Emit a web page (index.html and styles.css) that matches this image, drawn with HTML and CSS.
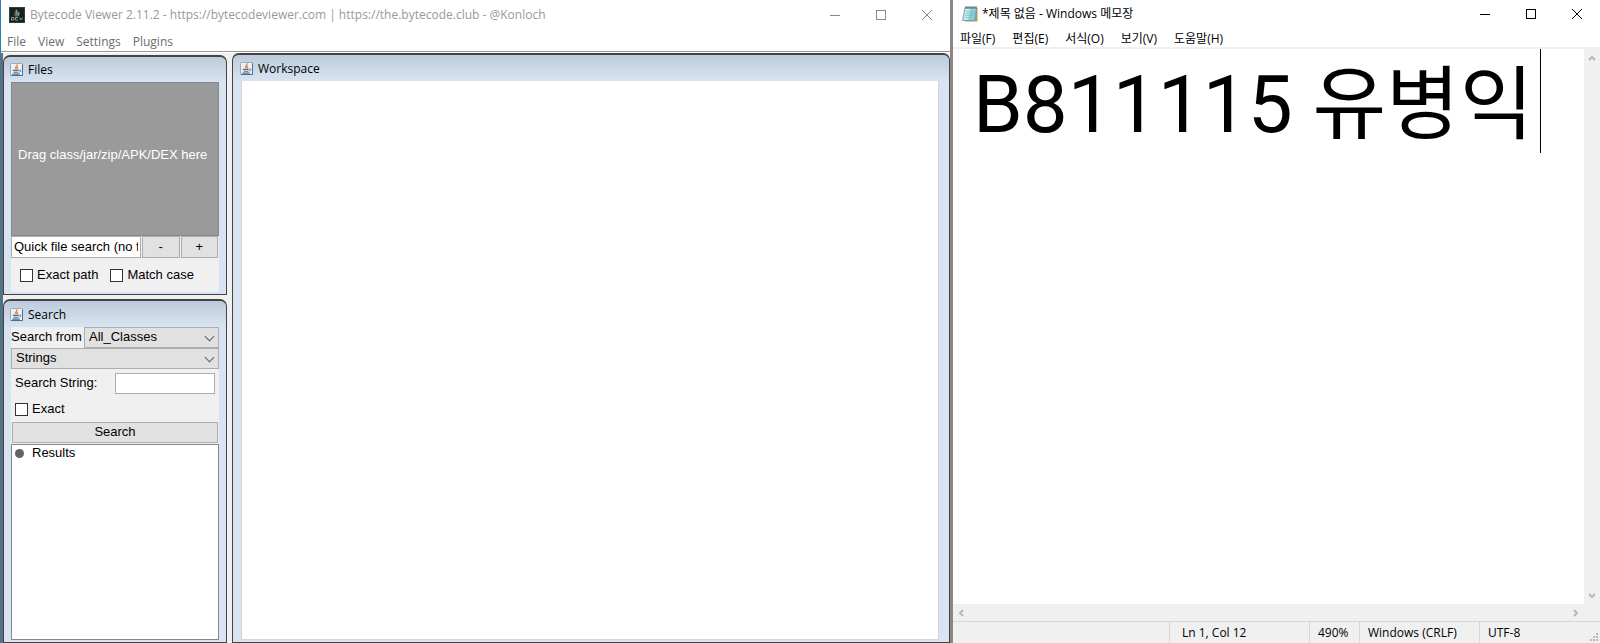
FILE: index.html
```html
<!DOCTYPE html>
<html lang="ko">
<head>
<meta charset="utf-8">
<title>Desktop</title>
<link rel="stylesheet" href="styles.css">
</head>
<body>
<svg class="defs" aria-hidden="true">
  <symbol id="java" viewBox="0 0 14 14">
    <rect x="0.5" y="0.5" width="13" height="13" rx="1" fill="#eef1f4" stroke="#8ba3b8"/>
    <path d="M1 13.5h12.5v-12" fill="none" stroke="#46647e"/>
    <path d="M7.5 1.500c1 1.500-3 2.500-1 5M8.500 4c-1.500 1-1 1.500-.5 3" fill="none" stroke="#e8792b" stroke-width="1.300"/>
    <path d="M3 8h6.500M4 10h5M2.500 12h8" fill="none" stroke="#456f93" stroke-width="1.200"/>
    <path d="M10 7.500c2.500-.5 2 2 0 2.200" fill="none" stroke="#456f93"/>
  </symbol>
  <symbol id="min" viewBox="0 0 12 12"><path d="M1 6.500h10" stroke="currentColor" fill="none"/></symbol>
  <symbol id="max" viewBox="0 0 12 12"><rect x="1.500" y="1.500" width="9" height="9" stroke="currentColor" fill="none"/></symbol>
  <symbol id="close" viewBox="0 0 12 12"><path d="M1 1l10 10M11 1L1 11" stroke="currentColor" fill="none"/></symbol>
  <symbol id="chev" viewBox="0 0 8 6"><path d="M1 5l3-3 3 3" stroke="currentColor" stroke-width="2" fill="none"/></symbol>
</svg>
<div class="desktop">
  <main class="viewer">
    <header class="titlebar">
      <svg class="app-icon" viewBox="0 0 16 16" aria-hidden="true">
        <rect width="16" height="16" fill="#17221f"/>
        <rect x=".5" y=".5" width="15" height="15" fill="none" stroke="#33413c"/>
        <path d="M5 8l1-4 2-2 1 3 2 1-1 3-3 1z" fill="#55645e"/>
        <path d="M7 3l1 2-1 3M10 5l-1 4" stroke="#a0aca6" fill="none" stroke-width=".8"/>
        <path d="M2.500 10.500h2.500v2.500H2.500zM9 10.500H6.500V13H9M10.500 10.500l1.500 2.500 1.500-2.500" stroke="#8d9692" fill="none"/>
      </svg>
      <h1>Bytecode Viewer 2.11.2 - https://bytecodeviewer.com | https://the.bytecode.club - @Konloch</h1>
      <div class="controls">
        <button aria-label="Minimize"><svg><use href="#min"/></svg></button>
        <button aria-label="Maximize"><svg><use href="#max"/></svg></button>
        <button aria-label="Close"><svg><use href="#close"/></svg></button>
      </div>
    </header>
    <nav class="menubar">
      <button>File</button><button>View</button><button>Settings</button><button>Plugins</button>
    </nav>
    <div class="panes">
      <div class="sidebar">
        <section class="frame files">
          <h2><svg aria-hidden="true"><use href="#java"/></svg>Files</h2>
          <div class="body">
            <div class="drop">Drag class/jar/zip/APK/DEX here</div>
            <div class="quick">
              <input type="text" aria-label="Quick file search" value="Quick file search (no file extension)">
              <button>-</button>
              <button>+</button>
            </div>
            <div class="checks">
              <label><input type="checkbox">Exact path</label>
              <label><input type="checkbox">Match case</label>
            </div>
          </div>
        </section>
        <section class="frame search">
          <h2><svg aria-hidden="true"><use href="#java"/></svg>Search</h2>
          <div class="body">
            <div class="from">
              <label for="from">Search from</label>
              <div class="combo"><select id="from"><option>All_Classes</option></select></div>
            </div>
            <div class="combo"><select aria-label="Search type"><option>Strings</option></select></div>
            <div class="query">
              <label for="query">Search String:</label>
              <input id="query" type="text">
            </div>
            <label class="exact"><input type="checkbox">Exact</label>
            <button class="go">Search</button>
            <ul class="results"><li>Results</li></ul>
          </div>
        </section>
      </div>
      <section class="frame workspace">
        <h2><svg aria-hidden="true"><use href="#java"/></svg>Workspace</h2>
        <div class="body"></div>
      </section>
    </div>
  </main>
  <aside class="notepad">
    <header class="titlebar">
      <svg class="note-icon" viewBox="0 0 16 16" aria-hidden="true">
        <path d="M4 2h11.500v13.500H3z" fill="#b59a62"/>
        <path d="M3 1.500h11.500L13 14.500H.5z" fill="#8fcbd8" stroke="#5e96a4" stroke-width=".7"/>
        <path d="M3.500 2.500h5L6 14H1.500z" fill="#c3e8ee"/>
        <path d="M4 5.500h9M3.500 7.500h9M3 9.500h9M3 11.500h9" stroke="#79b8c7" stroke-width=".6"/>
        <path d="M4 0v3M6 0v3M8 0v3M10 0v3M12 0v3M14 0v3" stroke="#4c5960" stroke-width=".8"/>
      </svg>
      <h1>*제목 없음 - Windows 메모장</h1>
      <div class="controls">
        <button aria-label="최소화"><svg><use href="#min"/></svg></button>
        <button aria-label="최대화"><svg><use href="#max"/></svg></button>
        <button aria-label="닫기"><svg><use href="#close"/></svg></button>
      </div>
    </header>
    <nav class="menubar">
      <button>파일(F)</button><button>편집(E)</button><button>서식(O)</button><button>보기(V)</button><button>도움말(H)</button>
    </nav>
    <div class="editor">
      <div class="page">
        <textarea aria-label="본문" spellcheck="false">B811115 유병익</textarea>
        <span class="caret"></span>
      </div>
      <div class="scroll vertical">
        <button aria-label="위로"><svg class="up"><use href="#chev"/></svg></button>
        <button aria-label="아래로"><svg class="down"><use href="#chev"/></svg></button>
      </div>
      <div class="scroll horizontal">
        <button aria-label="왼쪽"><svg class="left"><use href="#chev"/></svg></button>
        <button aria-label="오른쪽"><svg class="right"><use href="#chev"/></svg></button>
      </div>
    </div>
    <footer class="status">
      <span class="position">Ln 1, Col 12</span>
      <span class="zoom">490%</span>
      <span class="ending">Windows (CRLF)</span>
      <span class="encoding">UTF-8</span>
      <svg class="grip" viewBox="0 0 8 8" aria-hidden="true"><path d="M6 0h2v2H6zM3 3h2v2H3zM6 3h2v2H6zM0 6h2v2H0zM3 6h2v2H3zM6 6h2v2H6z" fill="#b8b8b8"/></svg>
    </footer>
  </aside>
</div>
</body>
</html>
```
FILE: styles.css
```css
* { box-sizing: border-box; }
body {
  margin: 0;
  background: #fff;
  color: #000;
  font-family: "Open Sans", "Noto Sans CJK KR", sans-serif;
  font-size: 12px;
  line-height: 16px;
}
button, input, select, textarea {
  margin: 0;
  padding: 0;
  border: 0;
  border-radius: 0;
  background: none;
  color: inherit;
  font: inherit;
}
h1, h2 { margin: 0; font-size: 12px; font-weight: 400; }
.defs { display: none; }
.desktop {
  display: grid;
  grid-template-columns: 953fr 647fr;
  min-height: 100vh;
}

/* Window chrome */
.titlebar { display: flex; align-items: center; white-space: nowrap; }
.titlebar h1 { flex: 1; }
.controls { display: flex; }
.controls button { width: 46px; height: 26px; display: grid; place-items: center; }
.controls svg { width: 12px; height: 12px; }
.menubar { display: flex; align-items: center; }
.menubar button { white-space: nowrap; }

/* Bytecode Viewer */
.viewer {
  display: flex;
  flex-direction: column;
  min-width: 0;
  border-left: 1px solid #2a80ae;
  border-right: 3px solid #8b8785;
}
.viewer .titlebar { height: 29px; padding-left: 8px; gap: 5px; color: #999; }
.app-icon { width: 16px; height: 16px; }
.viewer .controls { color: #8a8a8a; }
.viewer .menubar {
  height: 23px;
  padding: 3px 0 0 6px;
  gap: 12px;
  color: #6d6d6d;
  border-bottom: 1px solid #999;
}
.panes {
  flex: 1;
  display: grid;
  grid-template-columns: 224px 1fr;
  gap: 5px;
  margin-top: 1px;
  background: #f0f0f0;
  border-left: 2px solid #6b6b6b;
}
.sidebar { display: grid; grid-template-rows: auto 1fr; gap: 4px; padding-top: 2px; }
.frame {
  display: flex;
  flex-direction: column;
  border: 1px solid #444;
  border-top-width: 2px;
  border-radius: 7px 7px 0 0;
  background: linear-gradient(#bccbdb, #d8e4f1 26px);
  padding: 0 7px 2px;
  min-width: 0;
}
.frame h2 { display: flex; align-items: center; gap: 5px; height: 26px; margin-left: -1px; padding-top: 1px; }
.files h2 { height: 25px; padding-top: 0; }
.frame h2 svg { width: 13px; height: 13px; }
.frame .body {
  flex: 1;
  font-family: "Liberation Sans", "Noto Sans CJK KR", sans-serif;
  font-size: 13px;
  background: #f0f0f0;
}
.drop {
  height: 154px;
  display: flex;
  align-items: center;
  padding: 0 0 8px 6px;
  border: 1px solid #828790;
  background: #9a9a9a;
  color: #fff;
  white-space: nowrap;
}
.quick { display: grid; grid-template-columns: 130px 1fr 1fr; gap: 1px; height: 22px; padding-right: 1px; }
.quick input { min-width: 0; padding: 0 2px; border: 1px solid #abadb3; background: #fff; }
.quick button, .go { border: 1px solid #adadad; background: #e1e1e1; }
.checks { display: flex; gap: 12px; height: 34px; padding-left: 9px; align-items: center; }
label { display: flex; align-items: center; white-space: nowrap; }
input[type="checkbox"] {
  appearance: none;
  width: 13px;
  height: 13px;
  margin-right: 4px;
  border: 1px solid #333;
  background: #fff;
}
.search .body { display: flex; flex-direction: column; }
.from { display: grid; grid-template-columns: 73px 1fr; }
.combo { position: relative; height: 21px; }
.combo select {
  appearance: none;
  width: 100%;
  height: 21px;
  padding: 0 4px 2px;
  border: 1px solid #adadad;
  background: #e1e1e1;
}
.combo::after {
  content: "";
  position: absolute;
  right: 6px;
  top: 6px;
  width: 6px;
  height: 6px;
  border: solid #606060;
  border-width: 0 1px 1px 0;
  transform: rotate(45deg);
}
.from label, .query label { padding-bottom: 2px; }
.query { display: grid; grid-template-columns: 1fr 100px; padding: 4px; }
.query input { height: 21px; width: 100%; border: 1px solid #abadb3; background: #fff; }
.exact { height: 24px; padding: 0 0 2px 4px; }
.go { height: 21px; margin: 0 1px 1px; padding-bottom: 2px; }
.results {
  flex: 1;
  margin: 0;
  padding: 0 3px;
  list-style: none;
  border: 1px solid #828790;
  background: #fff;
}
.results li { display: flex; align-items: center; gap: 8px; }
.results li::before { content: ""; width: 9px; height: 9px; border-radius: 50%; background: #646464; }
.workspace { padding: 0 10px 2px 8px; }
.workspace .body { background: #fff; border: 1px solid #d6d6d6; border-top: 0; }

/* Notepad */
.notepad { display: flex; flex-direction: column; min-width: 0; }
.notepad .titlebar { height: 27px; padding-left: 9px; gap: 4px; }
.note-icon { width: 16px; height: 16px; }
.notepad .menubar { height: 22px; padding: 3px 0 0 7px; gap: 17px; border-bottom: 2px solid #f0f0f0; }
.editor { flex: 1; display: grid; grid-template: 1fr 17px / 1fr 16px; background: #f0f0f0; }
.page { position: relative; background: #fff; }
.page textarea {
  display: block;
  width: 100%;
  height: 100%;
  padding: 4px 0 0 20px;
  resize: none;
  outline: none;
  overflow: hidden;
  font-family: Roboto, "Noto Sans CJK KR", sans-serif;
  font-size: 80px;
  line-height: 104px;
}
.caret { position: absolute; left: 587px; top: 0; width: 1px; height: 104px; background: #000; }
.scroll { display: flex; justify-content: space-between; color: #b8b8b8; }
.vertical { flex-direction: column; }
.scroll button { width: 16px; height: 17px; display: grid; place-items: center; }
.scroll svg { width: 8px; height: 6px; }
.down { transform: rotate(180deg); }
.left { transform: rotate(-90deg); }
.right { transform: rotate(90deg); }
.status {
  position: relative;
  display: grid;
  grid-template-columns: 1fr 140px 50px 120px 121px;
  height: 22px;
  border-top: 1px solid #d7d7d7;
  background: #f0f0f0;
}
.status span { border-left: 1px solid #d7d7d7; padding-left: 8px; line-height: 21px; white-space: nowrap; }
.status .position { grid-column: 2; padding-left: 12px; }
.grip { position: absolute; right: 2px; bottom: 2px; width: 8px; height: 8px; }
```
